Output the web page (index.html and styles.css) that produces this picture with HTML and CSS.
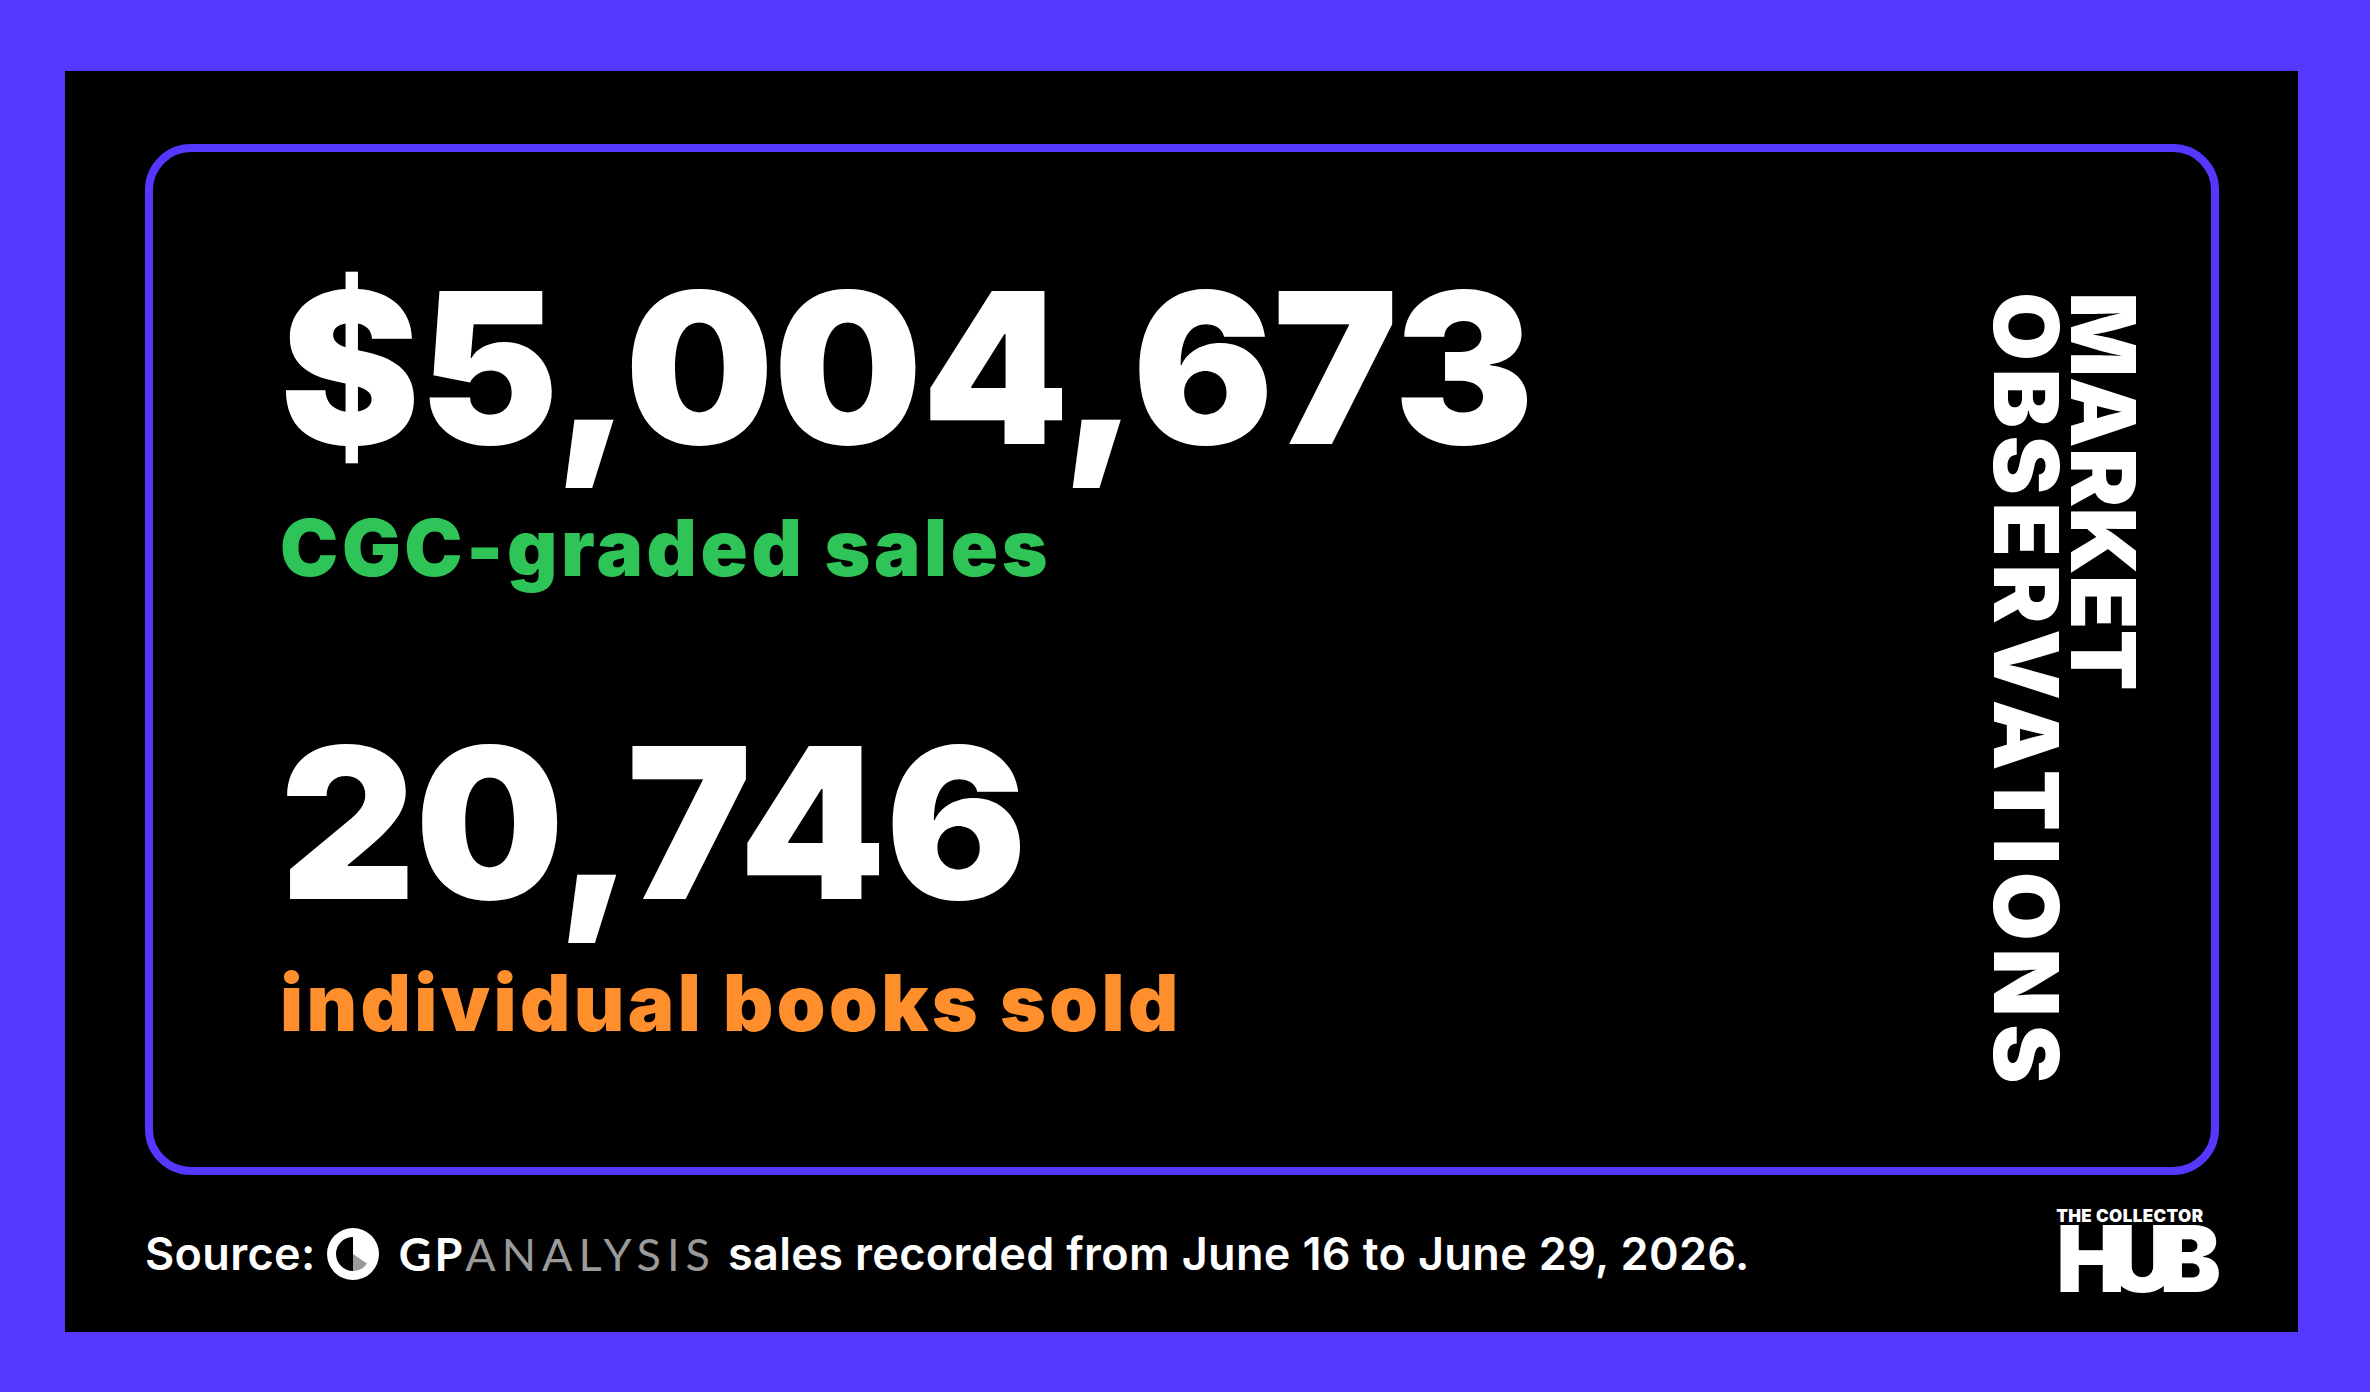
FILE: index.html
```html
<!DOCTYPE html>
<html lang="en">
<head>
<meta charset="utf-8">
<title>Market Observations</title>
<link rel="stylesheet" href="styles.css">
</head>
<body>
<div class="frame">
  <section class="card">
    <div class="stats">
      <div class="stat">
        <div class="figure">$5,004,673</div>
        <div class="label label-green">CGC-graded sales</div>
      </div>
      <div class="stat stat-second">
        <div class="figure">20,746</div>
        <div class="label label-orange">individual books sold</div>
      </div>
    </div>
    <h1 class="title"><span class="title-line title-a">MARKET</span><br><span class="title-line title-b">OBSERVATIONS</span></h1>
  </section>
  <footer class="footer">
    <p class="source">
      <span class="source-word">Source:</span>
      <svg class="gp-icon" viewBox="0 0 52 52" width="52" height="52" aria-hidden="true">
        <circle cx="26" cy="26" r="26" fill="#ffffff"/>
        <path d="M26 9 A17 17 0 0 0 26 43 Z" fill="#000000"/>
        <path d="M26 26 L26 43 A17 17 0 0 0 40 35.5 Z" fill="#9a9a9a"/>
      </svg>
      <span class="gp"><span class="gp-strong">GP</span><span class="gp-light">ANALYSIS</span></span>
      <span class="source-rest">sales recorded from June 16 to June 29, 2026.</span>
    </p>
    <div class="hub">
      <div class="hub-top">THE COLLECTOR</div>
      <div class="hub-main">HUB</div>
    </div>
  </footer>
</div>
</body>
</html>
```

FILE: styles.css
```css
html, body {
  margin: 0;
  padding: 0;
}

body {
  width: 2370px;
  height: 1392px;
  background: #5538ff;
  padding: 71px 72px 60px 65px;
  box-sizing: border-box;
  font-family: Inter, "Liberation Sans", sans-serif;
  color: #ffffff;
  overflow: hidden;
}

.frame {
  height: 1261px;
  background: #000000;
  padding: 73px 79px 0 80px;
  box-sizing: border-box;
  display: flex;
  flex-direction: column;
}

.card {
  height: 1031px;
  box-sizing: border-box;
  border: 8px solid #5538ff;
  border-radius: 46px;
  display: flex;
  justify-content: space-between;
  align-items: flex-start;
  padding: 111px 69px 0 127px;
}

.stats {
  display: flex;
  flex-direction: column;
}

.figure {
  font-size: 210px;
  line-height: 210px;
  font-weight: 900;
  letter-spacing: -0.8px;
  white-space: nowrap;
}

.label {
  margin-top: 36px;
  font-size: 78px;
  line-height: 78px;
  font-weight: 900;
  white-space: nowrap;
}

.label-green {
  color: #2fc457;
  letter-spacing: 3.6px;
}

.label-orange {
  color: #ff8f2c;
  letter-spacing: 3.4px;
}

.stat-second {
  margin-top: 131px;
}

.title {
  margin: 29px 0 0 0;
  writing-mode: vertical-rl;
  font-size: 89px;
  line-height: 77px;
  font-weight: 900;
  white-space: nowrap;
}

.title-a {
  letter-spacing: 0px;
}

.title-b {
  letter-spacing: 7.5px;
}

.footer {
  flex: 1;
  display: flex;
  align-items: center;
  justify-content: space-between;
}

.source {
  margin: 0;
  display: flex;
  align-items: center;
  font-family: Inter, "Liberation Sans", sans-serif;
  font-weight: 600;
  font-size: 45px;
  line-height: 52px;
  letter-spacing: 0.35px;
  white-space: nowrap;
}

.gp-icon {
  margin-left: 11px;
  display: block;
}

.gp {
  margin-left: 20px;
  font-family: Lato, "Liberation Sans", sans-serif;
  font-size: 45px;
  letter-spacing: 3px;
}

.gp-strong {
  font-weight: 700;
  color: #ffffff;
}

.gp-light {
  font-weight: 400;
  color: #9a9a9a;
  letter-spacing: 6px;
}

.source-rest {
  margin-left: 12px;
}

.hub {
  display: flex;
  flex-direction: column;
  align-items: flex-start;
  margin-top: -6px;
  margin-right: 14px;
}

.hub-top {
  font-size: 17px;
  line-height: 16px;
  font-weight: 900;
  letter-spacing: 0.4px;
  white-space: nowrap;
}

.hub-main {
  font-size: 92px;
  line-height: 70px;
  font-weight: 900;
  letter-spacing: -16px;
  white-space: nowrap;
}
```
